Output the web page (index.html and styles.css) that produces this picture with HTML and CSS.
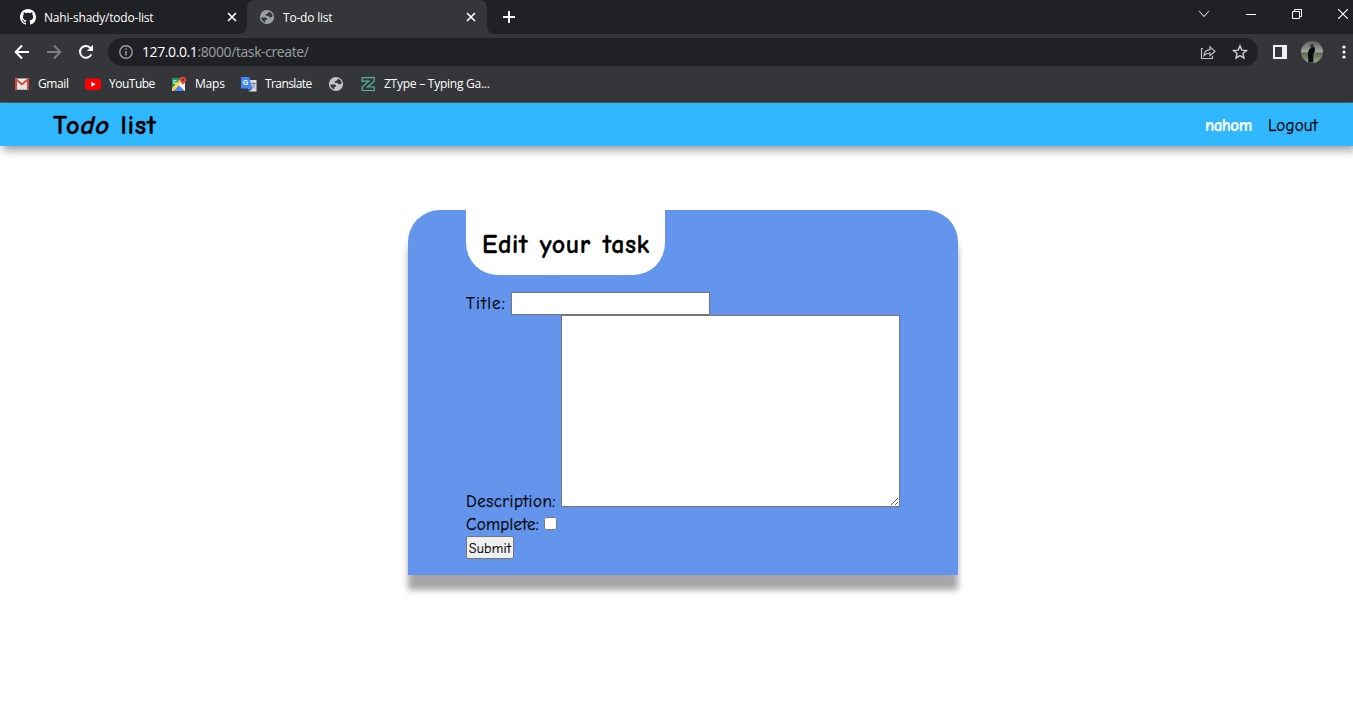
FILE: index.html
```html
<!DOCTYPE html>
<html lang="en">
<head>
<meta charset="utf-8">
<title>To-do list</title>
<link rel="stylesheet" href="styles.css">
</head>
<body>
<svg class="defs" width="0" height="0" aria-hidden="true">
  <symbol id="globe" viewBox="0 0 16 16">
    <circle cx="8" cy="8" r="7.1" fill="currentColor"/>
    <path d="M2.200 8.600H6c1.300 0 2.100.6 2.100 1.500 0 .8-.9 1.100-1.900 1.100v2.200C4 12.800 2.500 11 2.200 8.600zM9.800 2.600c2 .6 3.500 2.300 3.900 4.400-.7 1.200-1.500 1.300-2.700 1.200-1.300-.1-1.300-1.100-2.300-1.400-1-.2-2.100.1-2.100-.9 0-.9.900-.9 1.700-1.200.9-.3 1.500-.8 1.500-2.100z" fill="#35363a"/>
  </symbol>
  <symbol id="close" viewBox="0 0 10 10">
    <path d="M1 1l8 8M9 1L1 9" fill="none" stroke="currentColor" stroke-width="1.700"/>
  </symbol>
</svg>

<header class="browser">
  <div class="tabs">
    <div class="tab">
      <svg class="tab-icon" viewBox="0 0 16 16"><path fill="#fff" d="M8 0C3.580 0 0 3.580 0 8c0 3.540 2.290 6.530 5.470 7.590.4.070.55-.17.55-.38 0-.19-.01-.82-.01-1.490-2.010.37-2.530-.49-2.690-.94-.09-.23-.48-.94-.82-1.130-.28-.15-.68-.52-.01-.53.63-.01 1.080.58 1.230.82.72 1.210 1.870.87 2.330.66.070-.52.28-.87.51-1.070-1.780-.2-3.640-.89-3.640-3.950 0-.87.31-1.590.82-2.150-.08-.2-.36-1.020.08-2.120 0 0 .67-.21 2.200.82.64-.18 1.320-.27 2-.27s1.360.09 2 .27c1.530-1.040 2.200-.82 2.200-.82.44 1.100.16 1.920.08 2.120.51.56.82 1.270.82 2.150 0 3.070-1.870 3.750-3.650 3.950.29.25.54.73.54 1.480 0 1.070-.01 1.930-.01 2.200 0 .21.15.46.55.38A8.010 8.010 0 0 0 16 8c0-4.420-3.580-8-8-8z"/></svg>
      <span class="tab-title">Nahi-shady/todo-list</span>
      <svg class="tab-close"><use href="#close"/></svg>
    </div>
    <div class="tab tab-active">
      <svg class="tab-icon tab-globe"><use href="#globe"/></svg>
      <span class="tab-title">To-do list</span>
      <svg class="tab-close"><use href="#close"/></svg>
    </div>
    <svg class="tab-new" viewBox="0 0 12 12"><path d="M6 0v12M0 6h12" stroke="#fff" stroke-width="2"/></svg>
    <div class="window-controls">
      <svg width="12" height="8" viewBox="0 0 12 8"><path d="M1 1l5 5.500L11 1" fill="none" stroke="#cfd0d2" stroke-width="1.100"/></svg>
      <svg width="10" height="10" viewBox="0 0 10 10"><path d="M0 5.500h10" stroke="#fff"/></svg>
      <svg width="10" height="10" viewBox="0 0 10 10"><path d="M.5 2.500h7v7h-7zM2.500 2.500v-2h7v7h-2" fill="none" stroke="#fff"/></svg>
      <svg width="10" height="10" viewBox="0 0 10 10"><path d="M0 0l10 10M10 0L0 10" stroke="#fff" stroke-width="1.200"/></svg>
    </div>
  </div>

  <div class="toolbar">
    <svg class="nav-icon" viewBox="0 0 16 16"><path d="M15 8H2M8 1.500L1.700 8 8 14.500" fill="none" stroke="#fff" stroke-width="2"/></svg>
    <svg class="nav-icon" viewBox="0 0 16 16"><path d="M1 8h13M8 1.500L14.300 8 8 14.500" fill="none" stroke="#7d7e81" stroke-width="2"/></svg>
    <svg class="nav-icon" viewBox="0 0 16 16"><path d="M13.300 10.300A5.900 5.900 0 1 1 12.600 4.200" fill="none" stroke="#fff" stroke-width="2"/><path d="M15 .8v6.200H8.800z" fill="#fff"/></svg>
    <div class="address">
      <svg class="info" viewBox="0 0 14 14"><circle cx="7" cy="7" r="6.200" fill="none" stroke="#9aa0a6" stroke-width="1.400"/><path d="M7 6v4.500M7 3.300v1.500" stroke="#9aa0a6" stroke-width="1.500"/></svg>
      <span class="url"><span class="host">127.0.0.1</span>:8000/task-create/</span>
      <svg class="share" viewBox="0 0 16 16"><path d="M3 4.500H1.500v10h11V12M4 11.500c.3-3.800 2.500-5.800 6-5.900V2.800l5 4.700-5 4.200V9.200c-2.600 0-4.500.6-6 2.300z" fill="none" stroke="#bdc1c6" stroke-width="1.200"/></svg>
      <svg class="star" viewBox="0 0 16 16"><path d="M8 1.900l1.800 4.200 4.700.4-3.600 3 1.100 4.500-4-2.400L4 14l1.100-4.500-3.600-3 4.700-.4z" fill="none" stroke="#cdcfd2" stroke-width="1.400"/></svg>
    </div>
    <svg class="panel" viewBox="0 0 14 14"><path fill="#f1f1f3" fill-rule="evenodd" d="M0 0h14v14H0zM2 2v10h7V2z"/></svg>
    <svg class="avatar" viewBox="0 0 22 22">
      <defs>
        <linearGradient id="sky" x2="0" y2="1"><stop offset="0" stop-color="#5b5f5e"/><stop offset=".48" stop-color="#a0a49c"/><stop offset=".56" stop-color="#606b55"/><stop offset="1" stop-color="#9aa38b"/></linearGradient>
      </defs>
      <circle cx="11" cy="11" r="11" fill="url(#sky)"/>
      <circle cx="11" cy="5" r="2" fill="#42302d"/>
      <path d="M8 8.500l2.500-2 3.300-.5.200 4-1.700 3v8.500H7.500L6.800 13z" fill="#090c0e"/>
    </svg>
    <svg class="menu" viewBox="0 0 4 14"><g fill="#fff"><circle cx="2" cy="2" r="1.600"/><circle cx="2" cy="7" r="1.600"/><circle cx="2" cy="12" r="1.600"/></g></svg>
  </div>

  <nav class="bookmarks">
    <a class="bookmark bm-gmail"><svg viewBox="0 0 16 16"><path d="M1 2.500h14v11H1z" fill="#f1f1f1"/><path d="M3 13.500V5l5 4 5-4v8.500" fill="#e4e0df"/><path d="M1 2.500h1.500L8 7l5.500-4.500H15v11h-2V5.300L8 9.400 3 5.300v8.200H1z" fill="#d54339"/></svg><span>Gmail</span></a>
    <a class="bookmark bm-youtube"><svg viewBox="0 0 16 16"><rect y="2.500" width="16" height="11.500" rx="3" fill="#f00"/><path d="M6.300 5.700v5l4.400-2.500z" fill="#fff"/></svg><span>YouTube</span></a>
    <a class="bookmark bm-maps"><svg viewBox="0 0 16 16"><path d="M1 2h13v13H1z" fill="#e7e8e4"/><path d="M1 2h10L1 13z" fill="#20985b"/><path d="M2.500 15L8 9l6 6z" fill="#4989f4"/><path d="M1 12l8-8.500 1.500 2.500L2.500 15H1z" fill="#fbd34a"/><path d="M7.500 8.500l6.500 6.500V11L10 6.500z" fill="#f5f5f5"/><text x="2" y="7.500" class="maps-g">G</text><path d="M12 9.500C11.600 7 9 6.500 9 3.800a3 3 0 0 1 6 0c0 2.700-2.600 3.200-3 5.700z" fill="#e5463b"/><circle cx="12" cy="3.800" r="1.100" fill="#851f1c"/></svg><span>Maps</span></a>
    <a class="bookmark bm-translate"><svg viewBox="0 0 16 16"><path d="M6 4h9.500v11.500H8z" fill="#dcdfe2"/><path d="M0 1h8.200l3.300 11.500H0z" fill="#4286f5"/><path d="M8.500 15.500l-1-3h4z" fill="#2458b8"/><text x="1.700" y="9.300" class="translate-g">G</text><path d="M10.300 7.500h4.500M12.500 6v1.500M13.800 8c-.5 2-1.500 3.500-2.500 4M11 8.500c.7 1.700 1.700 3 3.200 4" fill="none" stroke="#687f8b" stroke-width=".9"/></svg><span>Translate</span></a>
    <a class="bookmark bm-globe"><svg><use href="#globe"/></svg></a>
    <a class="bookmark bm-ztype"><svg viewBox="0 0 16 16"><path d="M2.200 1.700h12v3.600L7.500 11h6.700v3.500h-12V11L8.800 5.200H2.200z" fill="none" stroke="#4cb997" stroke-width="1.200"/></svg><span>ZType – Typing Ga...</span></a>
  </nav>
</header>

<header class="site-header">
  <h1 class="brand">To<i>do</i> list</h1>
  <span class="user">nahom</span>
  <a class="logout">Logout</a>
</header>

<main class="card">
  <h2 class="card-title"><span>Edit your task</span></h2>
  <form class="form">
    <div class="row"><label class="label-title" for="title">Title:</label><input class="title-input" id="title" type="text"></div>
    <div class="row row-description"><label class="label-description" for="description">Description:</label><textarea class="description" id="description"></textarea></div>
    <div class="row row-complete"><label class="label-complete" for="complete">Complete:</label><input class="check" id="complete" type="checkbox"></div>
    <button class="submit" type="button">Submit</button>
  </form>
</main>
</body>
</html>
```

FILE: styles.css
```css
* { box-sizing: border-box; }
body {
  margin: 0;
  height: 720px;
  overflow: hidden;
  background: #fff;
  font-family: "Comic Sans MS", "Comic Neue", Lato, sans-serif;
  color: #000;
}
svg { display: block; flex: none; }
.defs { position: absolute; }

/* Browser frame */
.browser {
  height: 103px;
  background: #35363a;
  border-bottom: 1px solid #5b5c60;
  font-family: "Segoe UI", "Open Sans", sans-serif;
  font-size: 12px;
  color: #fff;
}
.tabs { display: flex; height: 34px; background: #202124; }
.tab {
  display: flex;
  align-items: center;
  width: 247px;
  padding: 0 10px 0 20px;
}
.tab-active {
  position: relative;
  width: 240px;
  padding: 0 11px 0 12px;
  background: #35363a;
  border-radius: 8px 8px 0 0;
}
/* Flared feet of the active tab */
.tab-active::before,
.tab-active::after {
  content: "";
  position: absolute;
  bottom: 0;
  width: 8px;
  height: 8px;
}
.tab-active::before {
  right: 100%;
  background: radial-gradient(circle at 0 0, #202124 7.5px, #35363a 8.5px);
}
.tab-active::after {
  left: 100%;
  background: radial-gradient(circle at 100% 0, #202124 7.5px, #35363a 8.5px);
}
.tab-icon { width: 16px; height: 16px; margin-right: 8px; }
.tab-globe { color: #9aa0a6; }
.tab-title { flex: 1; white-space: nowrap; letter-spacing: -.2px; }
.tab-close { width: 10px; height: 10px; }
.tab-new { width: 12px; height: 12px; margin: 11px 0 0 16px; }
.window-controls {
  display: flex;
  align-items: center;
  gap: 36px;
  height: 28px;
  margin-left: auto;
  padding-right: 5px;
}
.toolbar { display: flex; align-items: center; height: 36px; padding-left: 14px; }
.nav-icon { width: 16px; height: 16px; margin-right: 16px; }
.address {
  display: flex;
  align-items: center;
  width: 1150px;
  height: 28px;
  margin-left: -2px;
  padding: 0 10px 0 11px;
  border-radius: 14px;
  background: #202124;
}
.info { width: 14px; height: 14px; margin-right: 9px; }
.url { flex: 1; font-size: 14px; color: #9aa0a6; letter-spacing: -.4px; padding-bottom: 1px; }
.host { color: #fff; }
.share, .star { width: 16px; height: 16px; }
.star { margin-left: 16px; }
.panel { width: 14px; height: 14px; margin-left: 15px; }
.avatar { width: 22px; height: 22px; margin-left: 14px; }
.menu { width: 4px; height: 14px; margin-left: 19px; }
.bookmarks { display: flex; align-items: center; height: 28px; padding-left: 14px; }
.bookmark { display: flex; align-items: center; gap: 8px; white-space: nowrap; }
.bookmark span { padding-bottom: 1px; }
.bookmark svg { width: 16px; height: 16px; }
.bm-gmail { width: 71px; letter-spacing: -.4px; }
.bm-youtube { width: 86px; letter-spacing: -.5px; }
.bm-maps { width: 70px; letter-spacing: -.2px; }
.bm-translate { width: 87px; letter-spacing: -.6px; }
.bm-globe { width: 32px; color: #c3c5c9; }
.bm-ztype { letter-spacing: -.25px; }
.maps-g { font: bold 5px "Liberation Sans", sans-serif; fill: #fff; }
.translate-g { font: bold 7px "Liberation Sans", sans-serif; fill: #fff; }

/* Page */
.site-header {
  display: flex;
  align-items: center;
  height: 43px;
  padding: 2px 35px 0 53px;
  background: #2fb8ff;
  box-shadow: 3px 4px 9px rgba(0, 0, 0, .4);
  font-size: 17px;
}
.brand {
  flex: 1;
  margin: 0;
  font-size: 27px;
  font-weight: 700;
  letter-spacing: .75px;
  -webkit-text-stroke: .3px #000;
}
.user {
  width: 63px;
  color: #fff;
  font-weight: 700;
  letter-spacing: -.5px;
  -webkit-text-stroke: .25px #fff;
}
.logout { width: 50px; letter-spacing: .15px; -webkit-text-stroke: .25px #000; }
.card {
  width: 550px;
  height: 365px;
  margin: 64px 0 0 408px;
  padding: 0 58px;
  border-radius: 32px 32px 0 0;
  background: #6495ed;
  box-shadow: 0 15px 6px rgba(0, 0, 0, .35);
}
.card-title {
  width: 199px;
  height: 65px;
  margin: 0;
  padding: 18px 0 0 16px;
  border-radius: 0 0 32px 32px;
  background: #fff;
  font-size: 26px;
  line-height: 34px;
  letter-spacing: .55px;
  word-spacing: 2px;
  white-space: nowrap;
  -webkit-text-stroke: .3px #000;
}
.form { padding-top: 17px; font-size: 17px; }
.form label { -webkit-text-stroke: .25px #000; white-space: nowrap; }
.row { display: flex; align-items: center; height: 23px; }
.label-title { width: 45px; letter-spacing: 1.2px; }
.title-input {
  width: 199px;
  height: 23px;
  padding: 1px 2px;
  border: 1px solid #767676;
  background: #fff;
  font: inherit;
}
.row-description { height: 192px; align-items: flex-end; }
.label-description { width: 95px; line-height: 22px; margin-bottom: -6px; letter-spacing: .48px; }
.description {
  display: block;
  width: 339px;
  height: 192px;
  margin: 0;
  border: 1px solid #767676;
  background: #fff;
  font: inherit;
}
.row-complete { height: 29px; padding-top: 6px; }
.label-complete { width: 78px; letter-spacing: .25px; }
.check { width: 13px; height: 13px; margin: -2px 0 0; }
.submit {
  display: block;
  width: 48px;
  height: 23px;
  padding: 1px 0 0;
  border: 1px solid #767676;
  border-radius: 2px;
  background: #efefef;
  color: #000;
  font-family: inherit;
  font-size: 14px;
  letter-spacing: .25px;
  -webkit-text-stroke: .15px #000;
}
```
